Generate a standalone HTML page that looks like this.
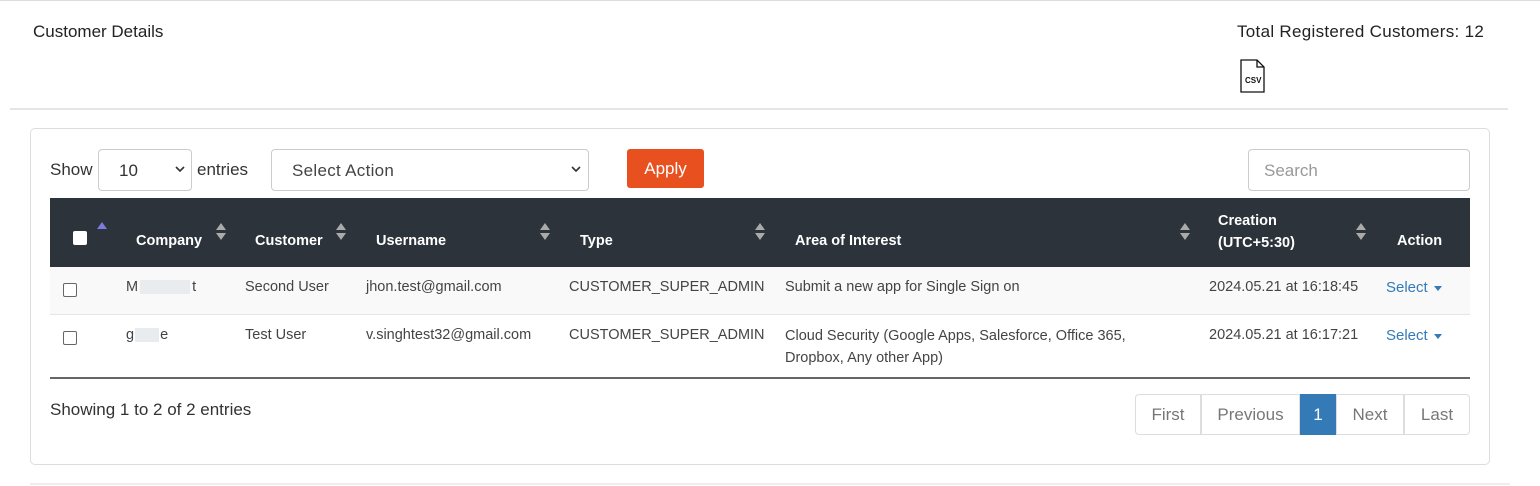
<!DOCTYPE html>
<html><head><meta charset="utf-8"><style>
*{box-sizing:border-box;margin:0;padding:0}
body{width:1540px;height:486px;background:#fff;font-family:"Liberation Sans",sans-serif;color:#333;position:relative;overflow:hidden;font-size:15px}
.a{position:absolute;white-space:nowrap}
.th{color:#fff;font-weight:bold;font-size:14.5px}
.sort{position:absolute;width:10px;height:18px}
.sort:before{content:"";position:absolute;left:0;top:0;border-left:5px solid transparent;border-right:5px solid transparent;border-bottom:7px solid #aaa}
.sort:after{content:"";position:absolute;left:0;top:10px;border-left:5px solid transparent;border-right:5px solid transparent;border-top:7px solid #aaa}
.cb{position:absolute;width:14px;height:14px;border:1px solid #666;border-radius:2px;background:#fff}
.td{font-size:14.5px;color:#444}
.sel{color:#337ab7;font-size:15px}
.car{display:inline-block;border-left:4px solid transparent;border-right:4px solid transparent;border-top:5px solid #337ab7;margin-left:6px;vertical-align:middle}
.pg{position:absolute;top:394px;height:41px;border:1px solid #ddd;margin-left:-1px;color:#777;font-size:17px;text-align:center;line-height:39px}
.chev{position:absolute;top:15px}
</style></head><body>
<div class="a" style="left:0;top:0;width:1540px;height:1px;background:#ddd"></div>
<div class="a" style="left:33px;top:22px;font-size:17px;color:#222">Customer Details</div>
<div class="a" style="left:1237px;top:22px;font-size:17px;color:#222;letter-spacing:0.3px">Total Registered Customers: 12</div>
<svg class="a" style="left:1240px;top:59px" width="26" height="35" viewBox="0 0 26 35"><path d="M1 1H17L24 8V33H1Z M17 1V8H24" fill="#fff" stroke="#111" stroke-width="1.3"/><text x="5" y="24" font-size="8" font-family="Liberation Sans Narrow,Liberation Sans" font-weight="bold" fill="#111">CSV</text></svg>
<div class="a" style="left:10px;top:108px;width:1498px;height:2px;background:#e5e5e5"></div>
<div class="a" style="left:30px;top:128px;width:1460px;height:337px;border:1px solid #ddd;border-radius:5px"></div>
<div class="a" style="left:50px;top:160px;font-size:17px">Show</div>
<div class="a" style="left:98px;top:149px;width:94px;height:42px;border:1px solid #ccc;border-radius:4px"><span class="a" style="left:20px;top:11px;font-size:17px">10</span><svg class="chev" style="left:76px" width="10" height="8" viewBox="0 0 10 8"><path d="M1 2L5 6L9 2" fill="none" stroke="#333" stroke-width="1.6"/></svg></div>
<div class="a" style="left:197px;top:160px;font-size:17px">entries</div>
<div class="a" style="left:271px;top:149px;width:318px;height:42px;border:1px solid #ccc;border-radius:4px"><span class="a" style="left:20px;top:11px;font-size:17px;color:#444;letter-spacing:0.3px">Select Action</span><svg class="chev" style="left:299px" width="10" height="8" viewBox="0 0 10 8"><path d="M1 2L5 6L9 2" fill="none" stroke="#333" stroke-width="1.6"/></svg></div>
<div class="a" style="left:627px;top:149px;width:77px;height:39px;background:#e8501f;border-radius:3px;color:#fff;font-size:17px;text-align:center;line-height:39px">Apply</div>
<div class="a" style="left:1248px;top:149px;width:222px;height:42px;border:1px solid #ccc;border-radius:4px"><span class="a" style="left:15px;top:11px;font-size:17px;color:#999">Search</span></div>
<div class="a" style="left:50px;top:198px;width:1420px;height:69px;background:#2d333a"></div>
<div class="a" style="left:73px;top:231px;width:14px;height:14px;background:#fff;border-radius:2px"></div>
<div class="a" style="left:97px;top:222px;border-left:5px solid transparent;border-right:5px solid transparent;border-bottom:7px solid #7b7be0"></div>
<div class="a th" style="left:136px;top:233px">Company</div><div class="sort" style="left:216px;top:223px"></div>
<div class="a th" style="left:255px;top:233px">Customer</div><div class="sort" style="left:336px;top:223px"></div>
<div class="a th" style="left:376px;top:233px">Username</div><div class="sort" style="left:540px;top:223px"></div>
<div class="a th" style="left:580px;top:233px">Type</div><div class="sort" style="left:755px;top:223px"></div>
<div class="a th" style="left:795px;top:233px">Area of Interest</div><div class="sort" style="left:1180px;top:223px"></div>
<div class="a th" style="left:1218px;top:210px;line-height:22px">Creation<br>(UTC+5:30)</div><div class="sort" style="left:1356px;top:223px"></div>
<div class="a th" style="left:1397px;top:233px">Action</div>
<div class="a" style="left:50px;top:267px;width:1420px;height:48px;background:#f9f9f9;border-bottom:1px solid #e5e5e5"></div>
<div class="cb" style="left:63px;top:283px"></div>
<div class="a td" style="left:126px;top:279px">M<span style="display:inline-block;width:50px;height:14px;background:#e8ecef;vertical-align:middle;margin:0 2px"></span>t</div>
<div class="a td" style="left:245px;top:279px">Second User</div>
<div class="a td" style="left:366px;top:279px">jhon.test@gmail.com</div>
<div class="a td" style="left:569px;top:279px">CUSTOMER_SUPER_ADMIN</div>
<div class="a td" style="left:785px;top:279px">Submit a new app for Single Sign on</div>
<div class="a td" style="left:1209px;top:279px">2024.05.21 at 16:18:45</div>
<div class="a sel" style="left:1386px;top:279px">Select<span class="car"></span></div>
<div class="cb" style="left:63px;top:331px"></div>
<div class="a td" style="left:126px;top:327px">g<span style="display:inline-block;width:24px;height:14px;background:#e8ecef;vertical-align:middle;margin:0 1px"></span>e</div>
<div class="a td" style="left:245px;top:327px">Test User</div>
<div class="a td" style="left:366px;top:327px">v.singhtest32@gmail.com</div>
<div class="a td" style="left:569px;top:327px">CUSTOMER_SUPER_ADMIN</div>
<div class="a td" style="left:785px;top:325px;line-height:22px">Cloud Security (Google Apps, Salesforce, Office 365,<br>Dropbox, Any other App)</div>
<div class="a td" style="left:1209px;top:327px">2024.05.21 at 16:17:21</div>
<div class="a sel" style="left:1386px;top:327px">Select<span class="car"></span></div>
<div class="a" style="left:50px;top:377px;width:1420px;height:2px;background:#666"></div>
<div class="a" style="left:50px;top:400px;font-size:17px;color:#333">Showing 1 to 2 of 2 entries</div>
<div class="pg" style="left:1136px;width:66px;border-radius:4px 0 0 4px">First</div>
<div class="pg" style="left:1202px;width:99px">Previous</div>
<div class="pg" style="left:1301px;width:36px;background:#337ab7;border-color:#337ab7;color:#fff">1</div>
<div class="pg" style="left:1337px;width:68px">Next</div>
<div class="pg" style="left:1405px;width:66px;border-radius:0 4px 4px 0">Last</div>
<div class="a" style="left:30px;top:483px;width:1480px;height:2px;background:#eee"></div>
</body></html>
